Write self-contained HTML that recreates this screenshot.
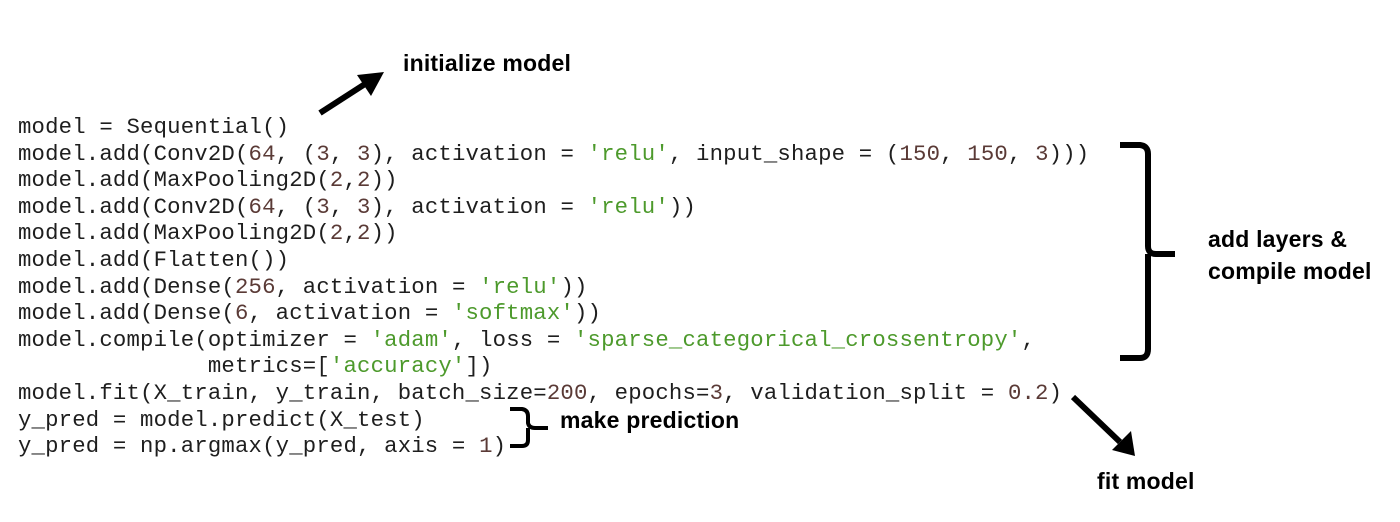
<!DOCTYPE html>
<html><head><meta charset="utf-8"><style>
body{margin:0;width:1400px;height:522px;background:#fff;position:relative;overflow:hidden}
pre{position:absolute;left:18px;top:114px;margin:0;font-family:"Liberation Mono","DejaVu Sans Mono",monospace;font-size:22.3px;line-height:26.6px;color:#1e1e1e;letter-spacing:0.18px}
.n{color:#5a3a36}.s{color:#4d9a2c}
.l{position:absolute;font-family:"Liberation Sans",sans-serif;font-weight:bold;font-size:23px;color:#000;line-height:30px;white-space:nowrap;letter-spacing:0.2px}
svg{position:absolute;left:0;top:0}
</style></head><body>
<pre>model = Sequential()
model.add(Conv2D(<span class="n">64</span>, (<span class="n">3</span>, <span class="n">3</span>), activation = <span class="s">'relu'</span>, input_shape = (<span class="n">150</span>, <span class="n">150</span>, <span class="n">3</span>)))
model.add(MaxPooling2D(<span class="n">2</span>,<span class="n">2</span>))
model.add(Conv2D(<span class="n">64</span>, (<span class="n">3</span>, <span class="n">3</span>), activation = <span class="s">'relu'</span>))
model.add(MaxPooling2D(<span class="n">2</span>,<span class="n">2</span>))
model.add(Flatten())
model.add(Dense(<span class="n">256</span>, activation = <span class="s">'relu'</span>))
model.add(Dense(<span class="n">6</span>, activation = <span class="s">'softmax'</span>))
model.compile(optimizer = <span class="s">'adam'</span>, loss = <span class="s">'sparse_categorical_crossentropy'</span>,
              metrics=[<span class="s">'accuracy'</span>])
model.fit(X_train, y_train, batch_size=<span class="n">200</span>, epochs=<span class="n">3</span>, validation_split = <span class="n">0.2</span>)
y_pred = model.predict(X_test)
y_pred = np.argmax(y_pred, axis = <span class="n">1</span>)</pre>
<div class="l" style="left:403px;top:48px">initialize model</div>
<div class="l" style="left:1208px;top:224px">add layers &amp;</div>
<div class="l" style="left:1208px;top:256px">compile model</div>
<div class="l" style="left:560px;top:405px">make prediction</div>
<div class="l" style="left:1097px;top:466px">fit model</div>
<svg width="1400" height="522">
<g stroke="#000" fill="none" stroke-width="6">
<line x1="320" y1="113" x2="365" y2="84"/>
<line x1="1073" y1="397" x2="1120" y2="442"/>
<path d="M1120 145 L1140 145 Q1148 146 1148 154 L1148 246 Q1148 254 1156 254 L1175 254 M1148 254 Q1148 262 1148 270 L1148 349 Q1148 358 1140 358 L1120 358"/>
<path d="M510 409 L522 409 Q528 410 528 416 L528 423 Q529 428 535 428 L548 428 M528 428 L528 440 Q528 446 522 446 L510 446" stroke-width="4"/>
</g>
<polygon points="384,72 357,75 371,96" fill="#000"/>
<polygon points="1135,456 1131,431 1112,450" fill="#000"/>
</svg>
</body></html>
